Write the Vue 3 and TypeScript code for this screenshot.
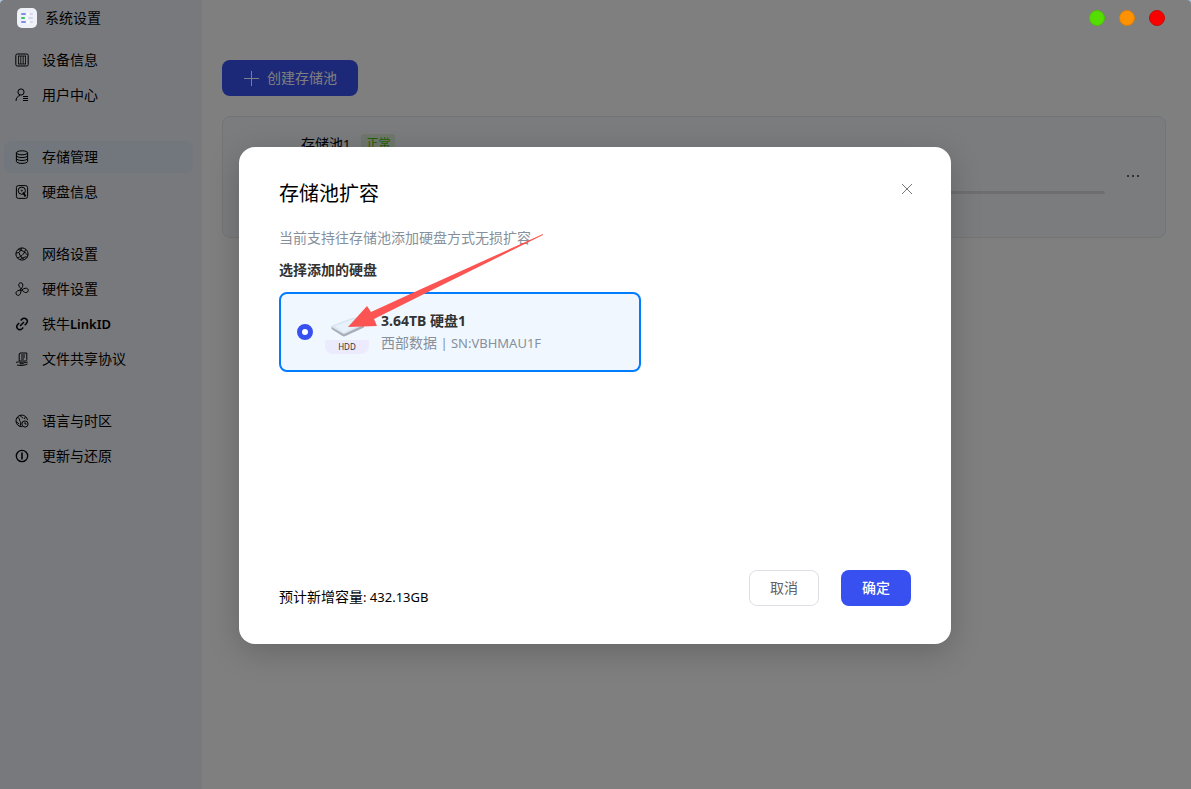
<script setup lang="ts">
import { ref } from 'vue'

interface MenuItem {
  icon: string
  label: string
  latin?: string
}

const groups: MenuItem[][] = [
  [
    { icon: 'device', label: '设备信息' },
    { icon: 'user', label: '用户中心' },
  ],
  [
    { icon: 'storage', label: '存储管理' },
    { icon: 'disk', label: '硬盘信息' },
  ],
  [
    { icon: 'network', label: '网络设置' },
    { icon: 'fan', label: '硬件设置' },
    { icon: 'link', label: '铁牛', latin: 'LinkID' },
    { icon: 'share', label: '文件共享协议' },
  ],
  [
    { icon: 'globe', label: '语言与时区' },
    { icon: 'info', label: '更新与还原' },
  ],
]

const active = ref('storage')
const disk = ref('disk1')
</script>

<template>
  <div class="window">
    <header class="titlebar">
      <svg class="logo" viewBox="0 0 20 20" aria-hidden="true">
        <rect width="20" height="20" rx="5" fill="#eef1f8" />
        <rect x="4" y="5" width="5" height="2" rx="1" fill="#7b90e6" />
        <rect x="12" y="5" width="4" height="2" rx="1" fill="#d3d8ec" />
        <circle cx="11" cy="6" r="1.5" fill="#fff" />
        <rect x="4" y="9" width="4" height="2" rx="1" fill="#35c563" />
        <rect x="11" y="9" width="5" height="2" rx="1" fill="#d3d8ec" />
        <circle cx="9.5" cy="10" r="1.5" fill="#fff" />
        <rect x="4" y="13" width="5" height="2" rx="1" fill="#7b90e6" />
        <rect x="13" y="13" width="3" height="2" rx="1" fill="#d3d8ec" />
        <circle cx="11" cy="14" r="1.5" fill="#fff" />
      </svg>
      <h1>系统设置</h1>
      <div class="lights">
        <button class="light green" type="button" aria-label="最小化"></button>
        <button class="light orange" type="button" aria-label="最大化"></button>
        <button class="light red" type="button" aria-label="关闭窗口"></button>
      </div>
    </header>

    <nav class="sidebar">
      <ul v-for="(group, g) in groups" :key="g">
        <li v-for="item in group" :key="item.icon">
          <button type="button" :class="{ active: active === item.icon }" @click="active = item.icon">
            <svg viewBox="0 0 14 14" aria-hidden="true">
              <g v-if="item.icon === 'device'">
                <rect x="0.8" y="1" width="12.4" height="12" rx="1.5" />
                <path d="M3 3h8M3 11h8M3.5 3v8M5.8 3v8M8.2 3v8M10.5 3v8" stroke-width="0.8" />
              </g>
              <g v-else-if="item.icon === 'user'">
                <circle cx="6" cy="4" r="3.1" />
                <path d="M1 13c0-3 1.6-4.8 4-5.6M8 8.500h5M8 10.500h5M8 12.500h5" />
              </g>
              <g v-else-if="item.icon === 'storage'">
                <ellipse cx="7" cy="2.8" rx="5.6" ry="2" />
                <path d="M1.4 2.8v8.6c0 1.1 2.5 2 5.6 2s5.6-.9 5.6-2V2.8M1.4 5.6c0 1.1 2.5 2 5.6 2s5.6-.9 5.6-2M1.4 8.5c0 1.1 2.5 2 5.6 2s5.6-.9 5.6-2" />
              </g>
              <g v-else-if="item.icon === 'disk'">
                <rect x="1.4" y=".6" width="11.2" height="12.8" rx="2" />
                <circle cx="6.8" cy="5.700" r="3.600" />
                <circle cx="6.8" cy="5.7" r=".5" />
                <path d="M8 7.500l2.600 4.100" stroke-width="1.800" />
              </g>
              <g v-else-if="item.icon === 'network'">
                <circle cx="7" cy="7" r="6.1" />
                <path d="M1.2 6C4 6.2 6.200 4 6.500 1M3.200 2.500C7 3 11 5.500 12.800 8.500M2.200 10.800C5 10.500 9.500 7.500 10.500 2.400M4.200 6c.6 2.800 2.600 5.300 5.400 6.500M5 12.700c1.600-2 5-3 7.500-2.700" />
              </g>
              <g v-else-if="item.icon === 'fan'">
                <path d="M6.200 6.800C4 5 3.200 3 4 1.700c.8-1.300 3-1.200 3.600.2.600 1.500 0 3.300-1.400 4.900zM6.900 8c2-1.900 4.500-2.300 5.700-1.200 1.100 1 .8 3-.7 3.600-1.600.6-3.500-.4-5-2.400zM5.700 8.100c.6 2.500-.4 4.700-2 5.200-1.500.4-3-.9-2.700-2.500.3-1.600 2.300-2.700 4.700-2.700z" />
                <circle cx="6.300" cy="7.500" r=".9" />
              </g>
              <g v-else-if="item.icon === 'link'" stroke-width="1.500">
                <path d="M5.700 3.600l1.200-1.300c1.300-1.300 3.100-1.300 4.400-.2 1.300 1.300 1.300 3 .1 4.300L9.700 8.200M8.300 10.500l-1.300 1.300c-1.300 1.200-3 1.200-4.300 0-1.200-1.300-1.200-3 0-4.300l1.500-1.600M5 9l4-4" />
              </g>
              <g v-else-if="item.icon === 'share'">
                <path d="M5 1h6.800v6.500c0 1-.5 1.500-1.400 1.500H4.200V2z M6 3h4M6 5h4M6 7h3M1 10.500c2-1 3.200-.6 4.500 0 1.500.6 3.500.5 7.200-.5M2 13c3 .8 7.500.6 10.500-1M4.500 11.800h4" />
              </g>
              <g v-else-if="item.icon === 'globe'">
                <path d="M7 12.700A5.800 5.800 0 1 1 12.500 6M2 3.500c2 .2 2.800 1.200 2.500 2.600-.2 1.200 1.600 1.400 1.300 2.800L5 12.400M5.500 1.200c.2 2 1.500 2 2.600 2.800M1.200 7.500L4 10M10.500 3L9 5" />
                <circle cx="10" cy="10" r="3.100" />
                <path d="M10 8.200V10h1.500" />
              </g>
              <g v-else stroke-width="1.300">
                <circle cx="7" cy="7" r="5.700" />
                <path d="M7 3.500v7" stroke-width="1.600" />
              </g>
            </svg>
            <span>{{ item.label }}<span v-if="item.latin" class="latin">{{ item.latin }}</span></span>
          </button>
        </li>
      </ul>
    </nav>

    <main class="content">
      <button class="create" type="button">
        <svg viewBox="0 0 16 16" aria-hidden="true"><path d="M8.500 1v15M1 8.500h15" /></svg>
        <span>创建存储池</span>
      </button>
      <section class="pool">
        <div class="pool-body">
          <div class="pool-name">
            <span>存储池<span class="latin">1</span></span>
            <span class="tag">正常</span>
          </div>
          <div class="bar"></div>
        </div>
        <button class="more" type="button" aria-label="更多">
          <svg viewBox="0 0 14 4" aria-hidden="true">
            <path d="M1 1h2v2H1zM6 1h2v2H6zM11 1h2v2h-2z" />
          </svg>
        </button>
      </section>
    </main>

    <div class="overlay">
      <div class="dialog" role="dialog" aria-modal="true" aria-labelledby="dialog-title">
        <div class="dialog-head">
          <h2 id="dialog-title">存储池扩容</h2>
          <button class="close" type="button" aria-label="关闭">
            <svg viewBox="0 0 12 12" aria-hidden="true"><path d="M1 1l10 10M11 1L1 11" /></svg>
          </button>
        </div>
        <p class="hint">当前支持往存储池添加硬盘方式无损扩容</p>
        <h3>选择添加的硬盘</h3>
        <label class="disk">
          <input v-model="disk" type="radio" name="disk" value="disk1" />
          <span class="drive">
            <svg viewBox="0 0 42 30" aria-hidden="true">
              <path d="M5.500 16.500v2.500l11 7c1 .6 2 .6 3 0l18.500-8.500V14.500z" fill="#a9adb8" />
              <path d="M6 15.500L26 8c1-.4 2-.4 3 0l8.500 5.500c.8.500.8 1.200 0 1.600L19.500 23.500c-1 .5-2 .5-3 0L6 17.300c-.8-.6-.8-1.400 0-1.800z" fill="#d9e5f1" />
              <path d="M8.500 16.300L27.500 9l8.500 5.300-18 8.200z" fill="#e6f1fa" />
            </svg>
            <span class="kind">HDD</span>
          </span>
          <span class="disk-text">
            <strong>3.64TB 硬盘1</strong>
            <span>西部数据<span class="latin"> | SN:VBHMAU1F</span></span>
          </span>
        </label>
        <div class="dialog-foot">
          <p>预计新增容量<span class="latin">: 432.13GB</span></p>
          <div class="actions">
            <button class="cancel" type="button">取消</button>
            <button class="ok" type="button">确定</button>
          </div>
        </div>
        <svg class="arrow" viewBox="0 0 196 94" aria-hidden="true">
          <path d="M196 0L72 56 24 78 20 72 1 93 30 92 27 85 85 56 196 1z" />
        </svg>
      </div>
    </div>
  </div>
</template>

<style>
body {
  margin: 0;
  background: #a9c4e4;
}
</style>

<style scoped>
.window {
  position: relative;
  display: grid;
  grid-template-columns: 202px 1fr;
  min-height: 100vh;
  overflow: hidden;
  border-radius: 4px 4px 0 0;
  background: #fff;
  color: #000;
  font: 14px/20px "Noto Sans", "Noto Sans CJK SC", sans-serif;
}
* {
  box-sizing: border-box;
}
button {
  padding: 0;
  border: 0;
  background: none;
  color: inherit;
  font: inherit;
  cursor: pointer;
}
h1, h2, h3, p, ul {
  margin: 0;
  padding: 0;
  font-weight: 400;
}
svg {
  fill: none;
  stroke: currentColor;
}
.latin {
  font-size: 13px;
}
.titlebar {
  position: absolute;
  z-index: 3;
  top: 0;
  left: 0;
  right: 0;
  display: flex;
  align-items: center;
  gap: 8px;
  height: 35px;
  padding: 0 26px 0 17px;
}
.logo {
  width: 20px;
  height: 20px;
  stroke: none;
}
h1 {
  font-size: 14px;
}
.lights {
  display: flex;
  gap: 14px;
  margin-left: auto;
}
.light {
  width: 16px;
  height: 16px;
  border: 1px solid;
  border-radius: 50%;
}
.green {
  background: #55dd00;
  border-color: #4bc400;
}
.orange {
  background: #ff9200;
  border-color: #df8000;
}
.red {
  background: #fb0000;
  border-color: #c90808;
}
.sidebar {
  display: flex;
  flex-direction: column;
  gap: 30px;
  padding: 44px 9px 0 4px;
  background: #eff2fa;
}
.sidebar ul {
  display: flex;
  flex-direction: column;
  gap: 3px;
  list-style: none;
}
.sidebar button {
  display: flex;
  align-items: center;
  gap: 13px;
  width: 100%;
  height: 32px;
  padding: 0 11px;
  border-radius: 8px;
}
.sidebar .latin {
  font-weight: 600;
}
.sidebar button.active {
  background: #e2eef8;
}
.sidebar svg {
  width: 14px;
  height: 14px;
}
.content {
  padding: 60px 25px 0 20px;
}
.create {
  display: flex;
  align-items: center;
  justify-content: center;
  gap: 8px;
  width: 136px;
  height: 36px;
  border-radius: 8px;
  background: #3850f0;
  color: #fff;
}
.create svg {
  width: 16px;
  height: 16px;
}
.pool {
  display: flex;
  align-items: center;
  gap: 20px;
  height: 122px;
  margin-top: 20px;
  padding: 0 24px 0 78px;
  border: 1px solid #e6e8ec;
  border-radius: 8px;
  background: #f6f9fd;
}
.pool-body {
  flex: 1;
  align-self: flex-start;
  padding-top: 17px;
}
.pool-name {
  display: flex;
  align-items: center;
  gap: 11px;
}
.tag {
  padding: 0 5px;
  border-radius: 3px;
  background: #e0f0dc;
  color: #43c000;
  font-size: 12px;
}
.bar {
  height: 3px;
  margin-top: 37px;
  border-radius: 2px;
  background: #dcdde0;
}
.more {
  width: 16px;
}
.more svg {
  display: block;
  width: 14px;
  height: 4px;
  margin: 0 auto 2px;
  fill: #666;
  stroke: none;
}
.overlay {
  position: absolute;
  z-index: 2;
  inset: 0;
  display: flex;
  align-items: center;
  justify-content: center;
  padding: 2px 1px 0 0;
  background: rgba(0, 0, 0, 0.5);
}
.dialog {
  position: relative;
  display: flex;
  flex-direction: column;
  width: 712px;
  min-height: 497px;
  padding: 33px 40px 38px;
  border-radius: 16px;
  background: #fff;
  box-shadow: 0 8px 32px rgba(0, 0, 0, 0.2);
}
.dialog-head {
  display: flex;
  align-items: flex-start;
  justify-content: space-between;
}
h2 {
  font-size: 20px;
  line-height: 28px;
}
.close {
  width: 12px;
  height: 18px;
  margin-right: -2px;
  color: #777;
}
.close svg {
  display: block;
  width: 12px;
  height: 12px;
  margin: auto;
}
.hint {
  margin-top: 20px;
  color: #86909c;
}
h3 {
  margin-top: 12px;
  color: #333;
  font-size: 14px;
  font-weight: 700;
}
.disk {
  display: flex;
  align-items: center;
  width: 362px;
  height: 80px;
  margin-top: 12px;
  padding: 0 16px;
  border: 2px solid #007dff;
  border-radius: 8px;
  background: #f0f7ff;
  cursor: pointer;
}
.disk input {
  appearance: none;
  width: 16px;
  height: 16px;
  margin: 0;
  border: 5px solid #3850f0;
  border-radius: 50%;
  background: #fff;
}
.drive {
  display: flex;
  flex-direction: column;
  width: 44px;
  margin: 0 12px;
}
.drive svg {
  height: 30px;
  stroke: none;
}
.kind {
  border-radius: 2px 2px 8px 8px;
  background: #ebebfd;
  color: #333;
  font-size: 8px;
  line-height: 14px;
  text-align: center;
}
.disk-text {
  display: flex;
  flex-direction: column;
  gap: 2px;
  color: #86909c;
}
.disk-text strong {
  color: #333;
}
.dialog-foot {
  display: flex;
  align-items: flex-end;
  justify-content: space-between;
  margin-top: auto;
}
.dialog-foot p {
  line-height: 18px;
}
.actions {
  display: flex;
  gap: 22px;
}
.actions button {
  width: 70px;
  height: 36px;
  border-radius: 8px;
}
.actions .cancel {
  border: 1px solid #dcdfe6;
  color: #606266;
}
.actions .ok {
  background: #3850f0;
  color: #fff;
  font-weight: 500;
}
.arrow {
  position: absolute;
  top: 87px;
  left: 108px;
  width: 196px;
  height: 94px;
  fill: #fc5452;
  stroke: none;
  pointer-events: none;
}
</style>
